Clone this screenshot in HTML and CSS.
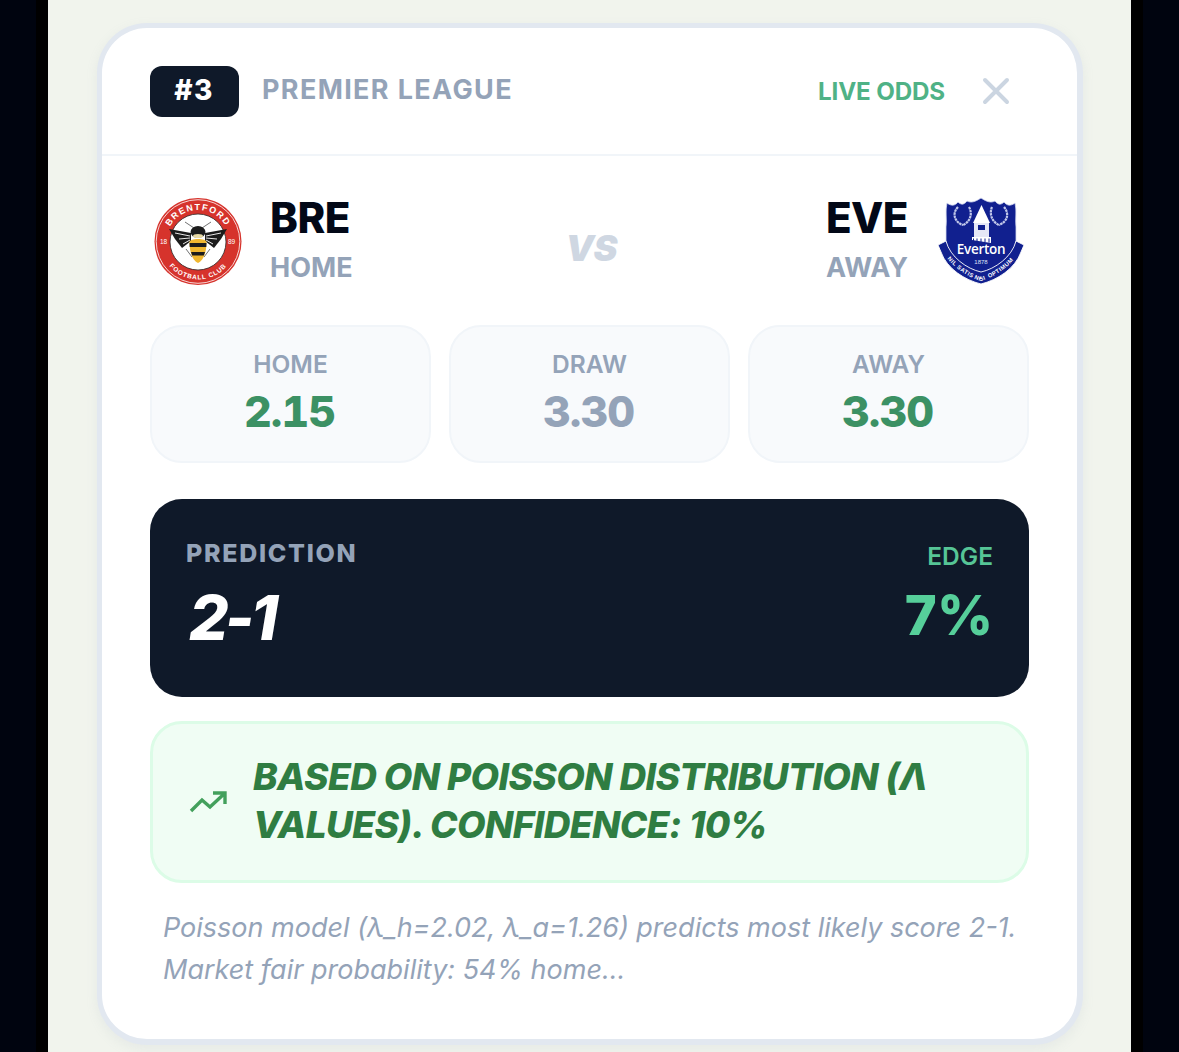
FILE: index.html
```html
<!DOCTYPE html>
<html lang="en">
<head>
<meta charset="utf-8">
<title>Match prediction</title>
<link rel="stylesheet" href="styles.css">
</head>
<body>
<div class="stage">
  <article class="card">
    <header class="card-head">
      <span class="rank">#3</span>
      <span class="league">PREMIER LEAGUE</span>
      <span class="live">LIVE ODDS</span>
      <svg class="close" viewBox="0 0 28 28" aria-label="Close"><path d="M3 3 L25 25 M25 3 L3 25"/></svg>
    </header>
    <div class="card-body">
      <section class="teams">
        <div class="team">
          <svg class="crest" viewBox="0 0 88 88">
            <defs>
              <path id="brTop" d="M12 45 A32 32 0 0 1 76 45"/>
              <path id="brBot" d="M6.500 45 A37.500 37.500 0 0 0 81.500 45"/>
            </defs>
            <circle cx="44" cy="44.500" r="43.500" fill="#d6332c"/>
            <circle cx="44" cy="44.500" r="41.800" fill="none" stroke="#fff" stroke-width=".8"/>
            <circle cx="44" cy="45" r="28" fill="#fff" stroke="#2a2a2a" stroke-width=".8"/>
            <text class="crest-ring"><textPath href="#brTop" startOffset="50%" text-anchor="middle">BRENTFORD</textPath></text>
            <text class="crest-ring small"><textPath href="#brBot" startOffset="50%" text-anchor="middle">FOOTBALL CLUB</textPath></text>
            <text class="crest-year" x="6" y="47">18</text>
            <text class="crest-year" x="74" y="47">89</text>
            <path d="M31 25 L40 31 M57 25 L48 31 M32 52 L38 60 M56 52 L50 60" stroke="#333" stroke-width=".7" fill="none"/>
            <path d="M15 32 L37 36 L37 44 L28 51 L21 42Z" fill="#1c1c1c"/>
            <path d="M73 32 L51 36 L51 44 L60 51 L67 42Z" fill="#1c1c1c"/>
            <path d="M21 36 L36 39 M25 42 L36 41 M29 47 L36 43 M67 36 L52 39 M63 42 L52 41 M59 47 L52 43" stroke="#fff" stroke-width=".9"/>
            <ellipse cx="44" cy="35" rx="7.500" ry="6" fill="#1c1c1c"/>
            <ellipse cx="44" cy="39" rx="5" ry="2" fill="#e7d9a4"/>
            <path d="M35.500 45 C35.500 41 52.500 41 52.500 45 C52.500 56 49 64 44 66 C39 64 35.500 56 35.500 45Z" fill="#f0b72f"/>
            <path d="M35.500 46 H52.500 L52.300 50 H35.700Z M37 55 H51 L49.800 58.500 H38.200Z" fill="#1c1c1c"/>
          </svg>
          <div class="team-name">
            <strong class="code">BRE</strong>
            <span class="side">HOME</span>
          </div>
        </div>
        <span class="vs">VS</span>
        <div class="team away">
          <div class="team-name right">
            <strong class="code">EVE</strong>
            <span class="side">AWAY</span>
          </div>
          <svg class="crest" viewBox="0 0 88 88">
            <path d="M10 6 C14 9 18 9 21 5 C24 8 27 8 30 4 C34 6 38 5 44 1 C50 5 54 6 58 4 C61 8 64 8 67 5 C70 9 74 9 78 6 C80 14 78 22 79 30 L79 46 C78 62 62 76 44 86 C26 76 10 62 9 46 L9 30 C10 22 8 14 10 6Z" fill="#11208f" stroke="#d6daf0" stroke-width=".8"/>
            <path d="M1 48 L9 44 C13 60 30 72 44 75 C58 72 75 60 79 44 L87 48 L84 55 C78 72 60 83 44 87 C28 83 10 72 4 55Z" fill="#11208f" stroke="#fff" stroke-width=".9"/>
            <path d="M36 26 L44.500 8 L53 26Z" fill="#fff"/>
            <path d="M37 26 H52 V40 H37Z" fill="#e5e7f6"/>
            <path d="M41 28 H48 V33 H41Z" fill="#11208f"/>
            <path d="M35 40 H54 V46 L35 43Z" fill="#fff"/>
            <path d="M36.500 41.500 V44 M40 41.500 V44.500 M44 41.500 V45 M48 41.500 V45 M52 41.500 V45.500" stroke="#11208f" stroke-width="1"/>
            <path d="M21 10 C15 16 17 25 26 28 M32 10 C36 17 33 25 26 28 M55 10 C52 17 55 25 62 28 M67 10 C73 17 70 25 62 28" fill="none" stroke="#c2c8ea" stroke-width="2.200" stroke-dasharray="2.500 .6"/>
            <text class="ev-name" x="44" y="56.500" text-anchor="middle">Everton</text>
            <text class="ev-year" x="44" y="67" text-anchor="middle">1878</text>
            <defs><path id="evBot" d="M5 54.500 C15 70.500 32 80.500 44 84 C56 80.500 73 70.500 83 54.500"/></defs>
            <text class="ev-motto"><textPath href="#evBot" startOffset="25%" text-anchor="middle">NIL SATIS</textPath></text>
            <text class="ev-motto"><textPath href="#evBot" startOffset="49%" text-anchor="middle">NISI</textPath></text>
            <text class="ev-motto"><textPath href="#evBot" startOffset="74%" text-anchor="middle">OPTIMUM</textPath></text>
          </svg>
        </div>
      </section>

      <section class="odds">
        <div class="odd"><span class="odd-label">HOME</span><span class="odd-value up">2.15</span></div>
        <div class="odd"><span class="odd-label">DRAW</span><span class="odd-value">3.30</span></div>
        <div class="odd"><span class="odd-label">AWAY</span><span class="odd-value up">3.30</span></div>
      </section>

      <section class="predict">
        <div class="predict-col">
          <span class="predict-label">PREDICTION</span>
          <span class="predict-score">2-1</span>
        </div>
        <div class="predict-col end">
          <span class="edge-label">EDGE</span>
          <span class="edge-value">7%</span>
        </div>
      </section>

      <section class="basis">
        <svg class="trend" viewBox="0 0 38 24"><path d="M2 21 L13 10 L21 17 L35 4 M24 3 H36 V14"/></svg>
        <p class="basis-text">BASED ON POISSON DISTRIBUTION (Λ VALUES). CONFIDENCE: 10%</p>
      </section>

      <p class="note">Poisson model (λ_h=2.02, λ_a=1.26) predicts most likely score 2-1. Market fair probability: 54% home...</p>
    </div>
  </article>
</div>
</body>
</html>
```

FILE: styles.css
```css
* { box-sizing: border-box; }
html, body { margin: 0; height: 100%; overflow: hidden; }
body {
  background: #00040f;
  font-family: Inter, "Liberation Sans", sans-serif;
}
.stage {
  margin: 0 36px;
  height: 1052px;
  background: #f1f4ed;
  border-left: 12px solid #000;
  border-right: 12px solid #000;
  padding: 23px 48px 0 49px;
}
.card {
  width: 986px;
  height: 1022px;
  background: #fff;
  border-style: solid;
  border-color: #e2e8f0;
  border-width: 5px 6px 6px 5px;
  border-radius: 50px;
  box-shadow: 0 4px 12px rgba(148, 163, 184, .12);
  display: flex;
  flex-direction: column;
}
.card-head {
  height: 128px;
  flex: none;
  border-bottom: 2px solid #f1f5f9;
  padding: 0 67px 0 48px;
  display: flex;
  align-items: center;
}
.rank {
  width: 89px;
  height: 51px;
  background: #0f1929;
  color: #fff;
  border-radius: 12px;
  font-size: 28px;
  font-weight: 800;
  letter-spacing: 1.500px;
  padding: 0 1px 3px 0;
  display: flex;
  align-items: center;
  justify-content: center;
  margin-top: 0;
}
.league {
  margin-left: 23px;
  margin-top: -4px;
  font-size: 27px;
  font-weight: 700;
  letter-spacing: 1.350px;
  color: #94a3b8;
}
.live {
  margin-left: auto;
  margin-top: 1px;
  font-size: 24.200px;
  font-weight: 700;
  letter-spacing: -.150px;
  color: #4fb286;
}
.close {
  width: 28px;
  height: 28px;
  margin-left: 37px;
  fill: none;
  stroke: #cbd5e1;
  stroke-width: 4;
  stroke-linecap: round;
}
.card-body {
  padding: 40px 48px 0;
  display: flex;
  flex-direction: column;
}
.teams {
  display: flex;
  align-items: center;
  justify-content: space-between;
  height: 90px;
  padding: 0 4px;
}
.team { display: flex; align-items: center; gap: 28px; }
.team.away { gap: 29px; }
.crest { width: 88px; height: 88px; flex: none; }
.team-name { display: flex; flex-direction: column; gap: 11px; margin-top: -1px; }
.team-name.right { align-items: flex-end; }
.code { font-size: 42px; line-height: 44px; font-weight: 800; color: #020817; letter-spacing: -.5px; }
.side { font-size: 27px; line-height: 34px; font-weight: 700; color: #94a3b8; }
.vs { font-size: 36px; font-weight: 900; font-style: italic; color: #cfd7e2; letter-spacing: -.5px; margin-left: 4px; margin-top: 14px; }
.odds {
  display: grid;
  grid-template-columns: repeat(3, 1fr);
  gap: 18px;
  margin-top: 39px;
}
.odd {
  height: 138px;
  background: #f8fafc;
  border: 2.500px solid #f1f5f9;
  border-radius: 32px;
  display: flex;
  flex-direction: column;
  align-items: center;
  padding-top: 21px;
}
.odd-label { font-size: 24.500px; line-height: 32px; font-weight: 600; color: #94a3b8; }
.odd-value {
  font-size: 43px;
  line-height: 50px;
  font-weight: 800;
  font-variant-numeric: tabular-nums;
  letter-spacing: -1px;
  color: #94a3b8;
  margin: 6px 0 0 -2px;
}
.odd-value.up { color: #3c9164; }
.predict {
  margin-top: 36px;
  height: 198px;
  background: #0f1929;
  border-radius: 32px;
  padding: 38px 36px 0;
  display: flex;
  justify-content: space-between;
}
.predict-col { display: flex; flex-direction: column; }
.predict-col.end { align-items: flex-end; }
.predict-label { font-size: 25px; line-height: 32px; font-weight: 800; letter-spacing: 1.700px; color: #94a3b8; }
.predict-score { font-size: 62px; line-height: 76px; font-weight: 800; font-style: italic; letter-spacing: -3.500px; color: #fff; margin-top: 11px; margin-left: 3px; }
.edge-label { font-size: 24.500px; line-height: 32px; font-weight: 600; color: #56c596; margin-top: 3px; }
.edge-value { font-size: 54.500px; line-height: 64px; font-weight: 800; color: #56cf9a; margin-top: 11px; }
.basis {
  margin-top: 24px;
  height: 162px;
  background: #f0fdf4;
  border: 3px solid #dcfce7;
  border-radius: 32px;
  padding: 0 36px;
  display: flex;
  align-items: center;
  gap: 26px;
}
.trend {
  width: 38px;
  height: 24px;
  flex: none;
  fill: none;
  stroke: #43a05c;
  stroke-width: 3.400;
}
.basis-text {
  margin: -2px 0 0;
  font-size: 37px;
  line-height: 48px;
  font-weight: 800;
  font-style: italic;
  letter-spacing: -.600px;
  color: #2f7d42;
}
.note {
  margin: 24px 0 0;
  padding: 0 8px 0 13px;
  font-size: 27px;
  line-height: 42px;
  font-style: italic;
  color: #94a3b8;
}
.crest-ring { font: 700 9px "Liberation Sans", sans-serif; fill: #fff; letter-spacing: 1.300px; }
.crest-ring.small { font-size: 6.500px; letter-spacing: .8px; }
.crest-year { font: 400 6.500px "Liberation Sans", sans-serif; fill: #fff; }
.ev-name { font: 600 13.500px "Open Sans", sans-serif; fill: #fff; letter-spacing: -.3px; }
.ev-year { font: 400 6px "Liberation Sans", sans-serif; fill: #dfe2f6; }
.ev-motto { font: 700 5.800px "Liberation Sans", sans-serif; fill: #fff; letter-spacing: .5px; }
```
